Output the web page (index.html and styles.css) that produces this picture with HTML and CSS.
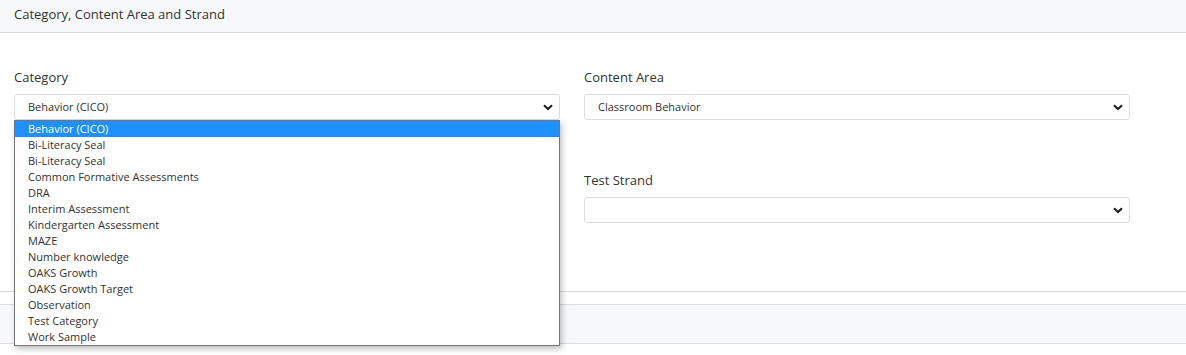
FILE: index.html
```html
<!DOCTYPE html>
<html>
<head>
<meta charset="utf-8">
<link rel="stylesheet" href="styles.css">
</head>
<body>
<div class="panel">
  <div class="panel-head">Category, Content Area and Strand</div>
  <div class="panel-body">
    <div class="grid">
      <div class="field">
        <label class="lbl">Category</label>
        <div class="select-wrap">
          <div class="select">Behavior (CICO)
            <svg class="chev" width="10" height="7" viewBox="0 0 10 7"><path d="M1 1.2 L5 5 L9 1.2" fill="none" stroke="#222" stroke-width="2.2"/></svg>
          </div>
          <ul class="menu">
            <li class="sel">Behavior (CICO)</li>
            <li>Bi-Literacy Seal</li>
            <li>Bi-Literacy Seal</li>
            <li>Common Formative Assessments</li>
            <li>DRA</li>
            <li>Interim Assessment</li>
            <li>Kindergarten Assessment</li>
            <li>MAZE</li>
            <li>Number knowledge</li>
            <li>OAKS Growth</li>
            <li>OAKS Growth Target</li>
            <li>Observation</li>
            <li>Test Category</li>
            <li>Work Sample</li>
          </ul>
        </div>
      </div>
      <div class="field">
        <label class="lbl">Content Area</label>
        <div class="select">Classroom Behavior
          <svg class="chev" width="10" height="7" viewBox="0 0 10 7"><path d="M1 1.2 L5 5 L9 1.2" fill="none" stroke="#222" stroke-width="2.2"/></svg>
        </div>
      </div>
      <div class="field"></div>
      <div class="field">
        <label class="lbl">Test Strand</label>
        <div class="select">
          <svg class="chev" width="10" height="7" viewBox="0 0 10 7"><path d="M1 1.2 L5 5 L9 1.2" fill="none" stroke="#222" stroke-width="2.2"/></svg>
        </div>
      </div>
    </div>
  </div>
  <div class="spacer"></div>
  <div class="panel-foot"></div>
</div>
</body>
</html>
```

FILE: styles.css
```css
* { box-sizing: border-box; }
html, body { margin: 0; padding: 0; background: #fff; }
body {
  font-family: "Open Sans", "Liberation Sans", sans-serif;
  color: #333;
  width: 1186px;
  height: 355px;
  overflow: hidden;
}
.panel-head {
  height: 33px;
  background: #f7f8fa;
  border-bottom: 1px solid #dcdcdc;
  padding: 5px 0 0 14px;
  font-size: 13px;
  color: #333;
}
.panel-body {
  padding: 35px 0 0 14px;
  height: 259px;
  border-bottom: 1px solid #dcdcdc;
}
.grid {
  display: grid;
  grid-template-columns: 546px 546px;
  column-gap: 24px;
  row-gap: 52px;
}
.field { height: 51px; }
.lbl {
  display: block;
  font-size: 13px;
  line-height: 18px;
  color: #333;
  margin-bottom: 8px;
}
.select-wrap { position: relative; }
.select {
  position: relative;
  height: 26px;
  border: 1px solid #dcdde2;
  border-radius: 3px;
  background: #fff;
  font-size: 11px;
  line-height: 24px;
  padding-left: 13px;
  color: #333;
}
.chev {
  position: absolute;
  right: 6px;
  top: 9px;
}
.menu {
  position: absolute;
  left: 0;
  top: 26px;
  width: 546px;
  margin: 0;
  padding: 0;
  list-style: none;
  background: #fff;
  border: 1px solid #767676;
  box-shadow: 2px 3px 6px rgba(0,0,0,0.25);
  z-index: 5;
}
.menu li {
  height: 16px;
  line-height: 16px;
  font-size: 11px;
  padding-left: 13px;
  color: #333;
}
.menu li.sel {
  background: #1e90ff;
  color: #fff;
}
.spacer { height: 12px; }
.panel-foot {
  height: 40px;
  background: #f7f8fa;
  border-top: 1px solid #dcdcdc;
  border-bottom: 1px solid #dcdcdc;
}
```
